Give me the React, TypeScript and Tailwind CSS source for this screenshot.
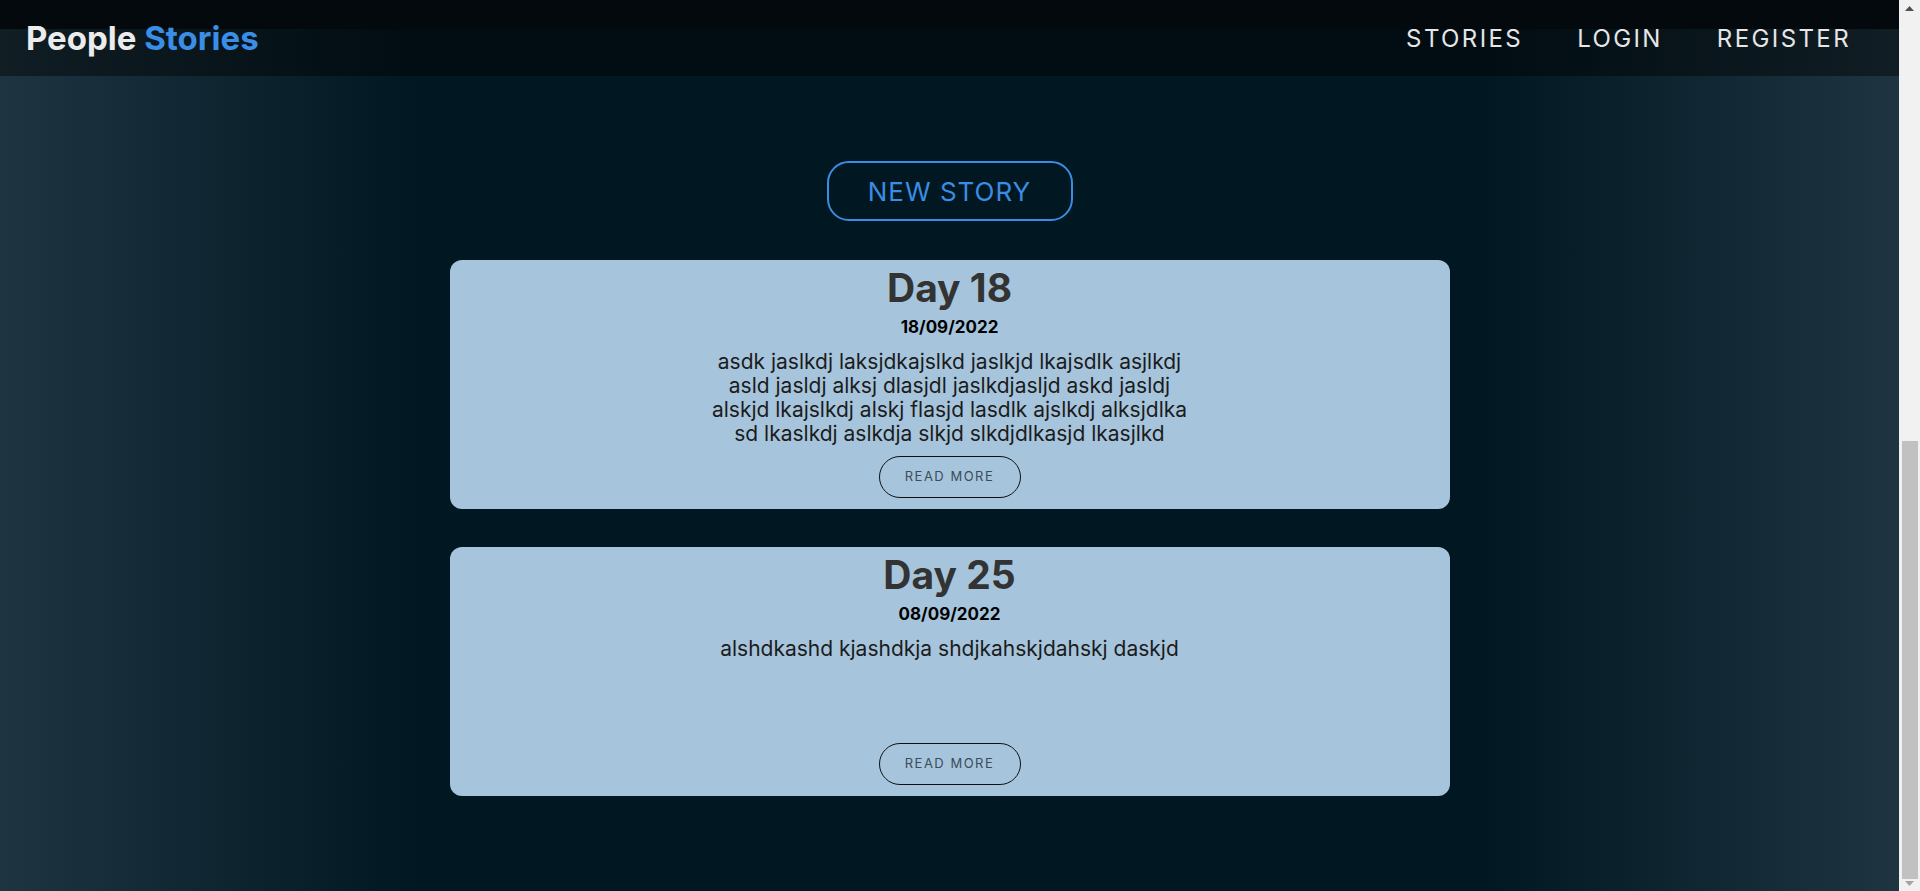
interface Story {
  id: number;
  title: string;
  date: string;
  body: string;
}

const stories: Story[] = [
  {
    id: 1,
    title: "Day 18",
    date: "18/09/2022",
    body: "asdk jaslkdj laksjdkajslkd jaslkjd lkajsdlk asjlkdj asld jasldj alksj dlasjdl jaslkdjasljd askd jasldj alskjd lkajslkdj alskj flasjd lasdlk ajslkdj alksjdlka sd lkaslkdj aslkdja slkjd slkdjdlkasjd lkasjlkd",
  },
  {
    id: 2,
    title: "Day 25",
    date: "08/09/2022",
    body: "alshdkashd kjashdkja shdjkahskjdahskj daskjd",
  },
];

const StoryCard = ({ story }: { story: Story }) => (
  <article className="w-[1000px] h-[249px] rounded-xl bg-[#a6c5dc] flex flex-col items-center pt-[8px] pb-[11px]">
    <h2 className="text-[39px] leading-[40px] font-bold text-[#333333]">
      {story.title}
    </h2>
    <p className="mt-[9px] text-[17px] leading-[20px] font-bold text-black">
      {story.date}
    </p>
    <p className="mt-[13px] w-[500px] text-center text-[21px] leading-[24px] text-[#1c1c1c]">
      {story.body}
    </p>
    <button className="mt-auto w-[142px] h-[42px] rounded-full border border-[#111111] text-[13px] tracking-[1.5px] text-[#3b4c5a]">
      READ MORE
    </button>
  </article>
);

// classic browser scrollbar, page scrolled to the bottom
const Scrollbar = () => (
  <div className="w-[21px] h-full shrink-0 flex flex-col bg-[#f1f1f1]">
    <div className="h-[17px] flex items-center justify-center">
      <svg width="9" height="5" viewBox="0 0 9 5">
        <polygon points="4.5,0 9,5 0,5" fill="#505050" />
      </svg>
    </div>
    <div className="flex-1 flex flex-col pt-[424px] pl-[3px] pr-[2px]">
      <div className="h-[438px] bg-[#c1c1c1]" />
    </div>
    <div className="h-[12px] flex items-start justify-center pt-[2px]">
      <svg width="9" height="5" viewBox="0 0 9 5">
        <polygon points="0,0 9,0 4.5,5" fill="#a3a3a3" />
      </svg>
    </div>
  </div>
);

const App = () => {
  return (
    <div className="h-screen flex overflow-hidden font-['Inter',sans-serif]">
      <div className="flex-1 flex flex-col bg-[linear-gradient(to_right,#1e3541_0%,#011722_22%,#011722_78%,#1e3541_100%)]">
        {/* Header */}
        <header className="h-[76px] shrink-0 flex items-center justify-between pt-[2px] pl-[26px] pr-[48px] bg-[linear-gradient(to_bottom,#04090e_29px,rgba(0,0,0,0.45)_29px)]">
          <div className="text-[33px] font-bold">
            <span className="text-[#ececec]">People</span>{" "}
            <span className="text-[#3a8ee6]">Stories</span>
          </div>
          <nav className="flex items-center gap-[54px] text-[24px] tracking-[2.4px] text-[#e6e6e6]">
            <a href="#">STORIES</a>
            <a href="#">LOGIN</a>
            <a href="#">REGISTER</a>
          </nav>
        </header>

        {/* Stories */}
        <main className="flex flex-col items-center pt-[85px]">
          <button className="w-[246px] h-[60px] rounded-[22px] border-2 border-[#3a8de3] text-[26px] tracking-[1px] text-[#3a8de3]">
            NEW STORY
          </button>
          <div className="mt-[39px] flex flex-col gap-[38px]">
            {stories.map((story) => (
              <StoryCard key={story.id} story={story} />
            ))}
          </div>
        </main>
      </div>
      <Scrollbar />
    </div>
  );
};

export default App;
